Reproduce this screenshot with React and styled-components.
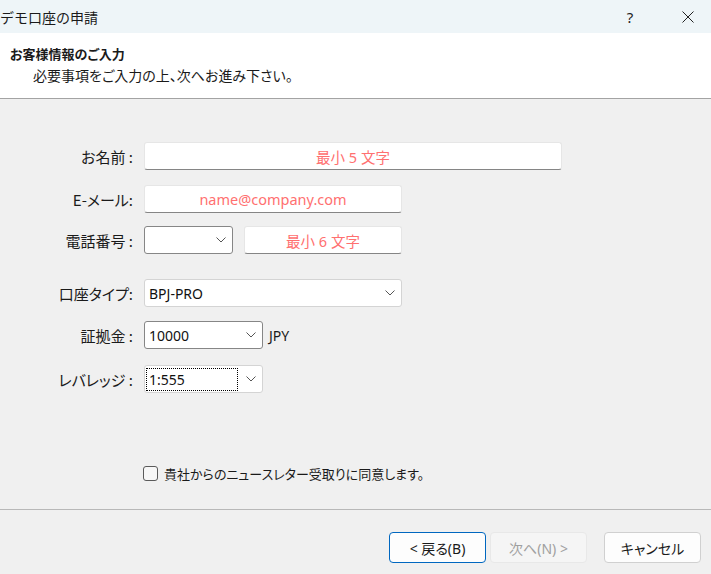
import React from "react";
import styled, { createGlobalStyle } from "styled-components";

const Global = createGlobalStyle`
  html, body { margin: 0; padding: 0; }
  body {
    width: 711px; height: 574px; overflow: hidden;
    font-family: "Noto Sans CJK JP", "Noto Sans", sans-serif;
    font-feature-settings: "palt";
    color: #1a1a1a;
    background: #f0f0f0;
  }
  * { box-sizing: border-box; }
`;

const Window = styled.div`
  width: 711px; height: 574px;
  display: flex; flex-direction: column;
  background: #f0f0f0;
  overflow: hidden;
`;

const TitleBar = styled.div`
  height: 33px; flex: none;
  background: #eef5f8;
  display: flex; align-items: center;
`;
const Title = styled.div`
  font-size: 14px; flex: 1; margin-left: 0; color: #1a1a1a;
  font-feature-settings: normal; white-space: nowrap;
`;
const TitleBtn = styled.div`
  width: 40px; height: 33px;
  display: flex; align-items: center; justify-content: center;
  font-size: 15px; color: #222;
  font-family: "Noto Sans", sans-serif;
  margin-left: ${p => p.$ml || 0}px;
  margin-right: ${p => p.$mr || 0}px;
`;

const Header = styled.div`
  height: 66px; flex: none; background: #fff;
  padding: 11px 0 0 10px;
  border-bottom: 1px solid #a3a3a3;
`;
const Heading = styled.div`
  font-size: 13px; font-weight: 700; line-height: 20px;
`;
const Sub = styled.div`
  font-size: 14px; line-height: 22px; padding-left: 23px;
`;

const Body = styled.div`
  flex: 1; padding-top: 43px;
  border-bottom: 1px solid #b8b8b8;
  font-size: 14px;
`;

const Row = styled.div`
  display: grid;
  grid-template-columns: 136px auto;
  column-gap: 8px;
  align-items: center;
  margin-top: ${p => p.$mt || 0}px;
`;
const Label = styled.div`
  text-align: right; font-size: 15px; white-space: nowrap;
  padding-right: 3px;
`;
const Fields = styled.div`
  display: flex; align-items: center; gap: ${p => p.$gap || 0}px;
`;
const TextBox = styled.div`
  width: ${p => p.$w}px; height: 28px;
  background: #fff;
  border: 1px solid #e6e6e6;
  border-bottom: 1px solid #858585;
  border-radius: 3px;
  display: flex; align-items: center; justify-content: center;
  color: #ff7070; font-size: 14.5px;
  font-family: "Noto Sans", "Noto Sans CJK JP", sans-serif;
`;
const Select = styled.div`
  width: ${p => p.$w}px; height: 28px;
  background: #fff;
  border: 1px solid ${p => (p.$dark ? "#868686" : "#d4d4d4")};
  border-radius: 3px;
  display: flex; align-items: center;
  padding: 0 6px 0 1px;
  font-family: "Noto Sans", sans-serif; font-size: 14px; color: #111;
`;
const SelValue = styled.div`
  flex: 1; height: 23px; display: flex; align-items: center;
  padding-left: 2px;
  border: 1px dotted ${p => (p.$focus ? "#000" : "transparent")};
  margin-right: 8px;
`;
const Unit = styled.span`
  font-family: "Noto Sans", sans-serif; font-size: 14px; margin-left: 6px;
`;

const Chevron = () => (
  <svg width="10" height="6" viewBox="0 0 10 6">
    <path d="M0.5 0.5 L5 5 L9.5 0.5" fill="none" stroke="#555" strokeWidth="1" />
  </svg>
);

const CheckRow = styled.label`
  display: flex; align-items: center; gap: 6px;
  margin: 71px 0 0 143px; font-size: 13px;
`;
const Box = styled.span`
  width: 15px; height: 15px; border: 1px solid #5a5a5a; border-radius: 3px;
  background: #f7f7f7; flex: none;
`;

const Footer = styled.div`
  height: 64px; flex: none;
  display: flex; justify-content: flex-end; align-items: flex-start;
  padding: 22px 10px 0 0;
`;
const Btn = styled.div`
  width: 97px; height: 31px;
  display: flex; align-items: center; justify-content: center;
  border-radius: 4px; font-size: 14px;
  font-family: "Noto Sans", "Noto Sans CJK JP", sans-serif;
  background: ${p => (p.$disabled ? "#f5f5f5" : "#fdfdfd")};
  color: ${p => (p.$disabled ? "#a0a0a0" : "#1a1a1a")};
  border: 1px solid ${p => (p.$primary ? "#0067c0" : p.$disabled ? "#e8e8e8" : "#d0d0d0")};
  margin-left: ${p => p.$ml || 0}px;
`;

export default function App() {
  return (
    <Window>
      <Global />
      <TitleBar>
        <Title>デモ口座の申請</Title>
        <TitleBtn>?</TitleBtn>
        <TitleBtn $ml={18} $mr={3}>
          <svg width="12" height="12" viewBox="0 0 12 12">
            <path d="M0.5 0.5 L11.5 11.5 M11.5 0.5 L0.5 11.5" stroke="#222" strokeWidth="1" />
          </svg>
        </TitleBtn>
      </TitleBar>
      <Header>
        <Heading>お客様情報のご入力</Heading>
        <Sub>必要事項をご入力の上、次へお進み下さい。</Sub>
      </Header>
      <Body>
        <Row>
          <Label>お名前 :</Label>
          <Fields><TextBox $w={418}>最小 5 文字</TextBox></Fields>
        </Row>
        <Row $mt={15}>
          <Label>E-メール:</Label>
          <Fields><TextBox $w={258}>name@company.com</TextBox></Fields>
        </Row>
        <Row $mt={13}>
          <Label>電話番号 :</Label>
          <Fields $gap={11}>
            <Select $w={89} $dark><SelValue /><Chevron /></Select>
            <TextBox $w={158}>最小 6 文字</TextBox>
          </Fields>
        </Row>
        <Row $mt={25}>
          <Label>口座タイプ:</Label>
          <Fields><Select $w={258}><SelValue>BPJ-PRO</SelValue><Chevron /></Select></Fields>
        </Row>
        <Row $mt={14}>
          <Label>証拠金 :</Label>
          <Fields>
            <Select $w={119} $dark><SelValue>10000</SelValue><Chevron /></Select>
            <Unit>JPY</Unit>
          </Fields>
        </Row>
        <Row $mt={16}>
          <Label>レバレッジ :</Label>
          <Fields><Select $w={119}><SelValue $focus>1:555</SelValue><Chevron /></Select></Fields>
        </Row>
        <CheckRow>
          <Box />
          貴社からのニュースレター受取りに同意します。
        </CheckRow>
      </Body>
      <Footer>
        <Btn $primary>&lt; 戻る(B)</Btn>
        <Btn $disabled $ml={4}>次へ(N) &gt;</Btn>
        <Btn $ml={17}>キャンセル</Btn>
      </Footer>
    </Window>
  );
}
